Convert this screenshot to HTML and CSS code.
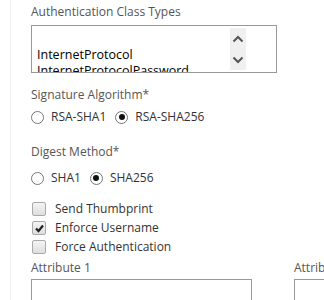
FILE: index.html
```html
<!DOCTYPE html>
<html>
<head>
<meta charset="utf-8">
<link rel="stylesheet" href="styles.css">
</head>
<body>
<div class="page">
  <div class="form">
    <div class="label first">Authentication Class Types</div>
    <div class="listbox">
      <div class="list-items">
        <div class="opt"></div>
        <div class="opt">InternetProtocol</div>
        <div class="opt">InternetProtocolPassword</div>
      </div>
      <div class="scroller">
        <svg width="12" height="8" viewBox="0 0 12 8"><path d="M1.5 6.5 L6 2 L10.5 6.5" fill="none" stroke="#555" stroke-width="2"/></svg>
        <svg width="12" height="8" viewBox="0 0 12 8"><path d="M1.5 1.5 L6 6 L10.5 1.5" fill="none" stroke="#555" stroke-width="2"/></svg>
      </div>
    </div>

    <div class="label sig">Signature Algorithm*</div>
    <div class="radios r1">
      <span class="radio"><span class="circle"></span>RSA-SHA1</span>
      <span class="radio"><span class="circle on"></span>RSA-SHA256</span>
    </div>

    <div class="label dig">Digest Method*</div>
    <div class="radios r2">
      <span class="radio"><span class="circle"></span>SHA1</span>
      <span class="radio"><span class="circle on"></span>SHA256</span>
    </div>

    <div class="checks">
      <div class="check"><span class="box"></span>Send Thumbprint</div>
      <div class="check"><span class="box"><svg width="11" height="11" viewBox="0 0 11 11"><path d="M2 5.5 L4.5 8 L9 2.5" fill="none" stroke="#222" stroke-width="2.2"/></svg></span>Enforce Username</div>
      <div class="check"><span class="box"></span>Force Authentication</div>
    </div>

    <div class="attrs">
      <div class="attr">
        <div class="label">Attribute 1</div>
        <div class="input wide"></div>
      </div>
      <div class="attr">
        <div class="label">Attrib</div>
        <div class="input"></div>
      </div>
    </div>
  </div>
</div>
</body>
</html>
```
FILE: styles.css
```css
html, body {
  margin: 0;
  padding: 0;
  background: #fff;
}
body {
  font-family: "Open Sans", "Noto Sans", sans-serif;
  font-size: 12px;
  color: #555;
  overflow: hidden;
  width: 324px;
  height: 300px;
}
.page {
  margin-left: 10px;
  border-left: 1px solid #eeeeee;
  height: 300px;
  padding-left: 20px;
}
.form {
  display: flex;
  flex-direction: column;
}
.label {
  line-height: 16px;
  color: #555;
}
.label.first {
  margin-top: 4px;
  margin-bottom: 5px;
}
.label.sig {
  margin-top: 14px;
}
.label.dig {
  margin-top: 19px;
}
.radios.r1 {
  margin-top: 6px;
}
.radios.r2 {
  margin-top: 10px;
}
.listbox {
  width: 244px;
  height: 46px;
  border: 1px solid #999;
  display: flex;
  overflow: hidden;
}
.list-items {
  flex: 1;
  padding-left: 5px;
  padding-top: 5px;
  font-size: 12.5px;
  color: #000;
  overflow: hidden;
}
.opt {
  height: 16px;
  line-height: 16px;
  white-space: nowrap;
}
.scroller {
  width: 16px;
  margin: 2px 30px 2px 0;
  background: #f0f0f0;
  display: flex;
  flex-direction: column;
  align-items: center;
  justify-content: space-around;
}
.radios {
  display: flex;
  gap: 9px;
  color: #333;
}
.radio {
  display: flex;
  align-items: center;
  gap: 7px;
  line-height: 16px;
}
.circle {
  width: 11px;
  height: 11px;
  border: 1px solid #777;
  border-radius: 50%;
  box-sizing: content-box;
  display: flex;
  align-items: center;
  justify-content: center;
}
.circle.on::after {
  content: "";
  width: 6px;
  height: 6px;
  border-radius: 50%;
  background: #111;
}
.checks {
  margin-top: 15px;
  display: flex;
  flex-direction: column;
  gap: 3px;
  color: #333;
}
.check {
  display: flex;
  align-items: center;
  gap: 9px;
  line-height: 16px;
  padding-left: 1px;
}
.box {
  width: 12px;
  height: 12px;
  border: 1px solid #aaa;
  border-radius: 2px;
  background: linear-gradient(#f4f4f4, #dedede);
  display: flex;
  align-items: center;
  justify-content: center;
}
.attrs {
  display: flex;
  gap: 42px;
}
.attr .label {
  margin-top: 5px;
  margin-bottom: 3px;
}
.input {
  width: 40px;
  height: 30px;
  border: 1px solid #999;
}
.input.wide {
  width: 219px;
}
```
